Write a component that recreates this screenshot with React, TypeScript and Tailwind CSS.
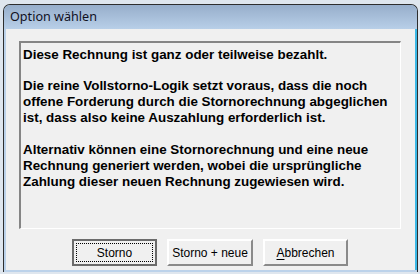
export default function App() {
  return (
    <div className="w-[420px] h-[274px] overflow-hidden bg-[#dfe6ee] pt-[4px] pl-[3px]">
      <div className="w-[415px] h-[268px] flex flex-col rounded-t-[7px] border border-b-0 border-[#2e2e2e] bg-[#bcd2ea] overflow-hidden">
        <div className="h-[24px] shrink-0 flex items-center pl-[6px] bg-gradient-to-b from-[#97aecb] to-[#b8cfe8] text-[12.6px] text-[#10101e] font-['Noto_Sans',sans-serif]">
          Option wählen
        </div>
        <div className="flex-1 flex ml-[2px] mb-[2px]">
          <div className="flex-1 flex flex-col bg-[#f0f0f0] pt-[12px] pl-[13px] pr-[14px] pb-[4px] font-['Liberation_Sans',Arial,sans-serif]">
            <div className="h-[188px] border-t-2 border-l-2 border-[#858585] border-r border-b border-r-white border-b-white pl-[2px] pt-[4px] text-[13.4px] leading-[16px] font-bold text-black">
              <p>Diese Rechnung ist ganz oder teilweise bezahlt.</p>
              <p className="mt-[15px]">
                Die reine Vollstorno-Logik setzt voraus, dass die noch
                <br />
                offene Forderung durch die Stornorechnung abgeglichen
                <br />
                ist, dass also keine Auszahlung erforderlich ist.
              </p>
              <p className="mt-[16px]">
                Alternativ können eine Stornorechnung und eine neue
                <br />
                Rechnung generiert werden, wobei die ursprüngliche
                <br />
                Zahlung dieser neuen Rechnung zugewiesen wird.
              </p>
            </div>
            <div className="mt-[10px] flex justify-center gap-[10px] text-[12px] text-black">
              <button className="w-[85px] h-[27px] border-2 border-[#6b6b6b] bg-[#f0f0f0] p-[2px]">
                <span className="flex h-full w-full items-center justify-center border border-dotted border-black">
                  Storno
                </span>
              </button>
              <button className="w-[86px] h-[27px] border-2 border-t-white border-l-white border-r-[#8a8a8a] border-b-[#8a8a8a] bg-[#f0f0f0]">
                Storno + neue
              </button>
              <button className="w-[85px] h-[27px] border-2 border-t-white border-l-white border-r-[#8a8a8a] border-b-[#8a8a8a] bg-[#f0f0f0]">
                <span className="underline underline-offset-2">A</span>bbrechen
              </button>
            </div>
          </div>
          <div className="w-[2px] bg-[#3ab8e6]" />
        </div>
      </div>
    </div>
  );
}
